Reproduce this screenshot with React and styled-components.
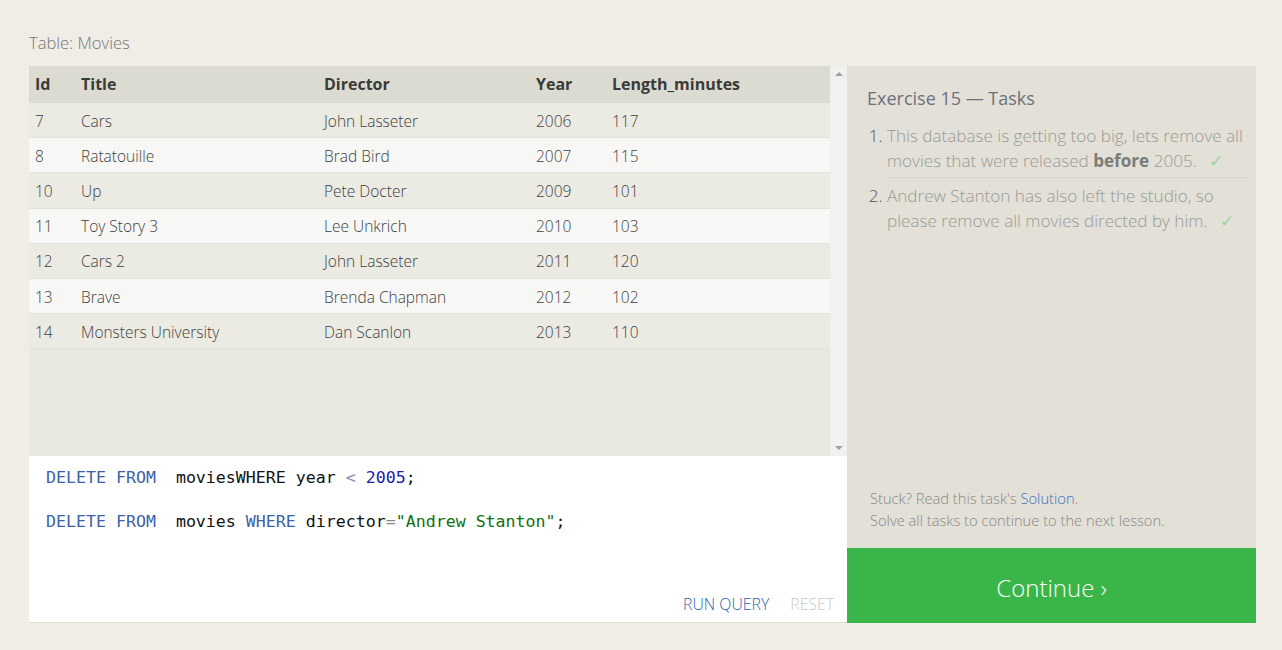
import React from "react";
import styled, { createGlobalStyle } from "styled-components";

const Global = createGlobalStyle`
  body {
    margin: 0;
    background: #efede6;
    font-family: "Open Sans", "Noto Sans", sans-serif;
  }
`;

const Page = styled.div`
  padding: 31px 0 0 29px;
  width: 1227px;
`;

const Caption = styled.div`
  font-size: 16.6px;
  font-weight: 300;
  color: #777;
  height: 35px;
  line-height: 24px;
`;

const Main = styled.div`
  display: grid;
  grid-template-columns: 818px 409px;
  height: 557px;
`;

const Left = styled.div`
  display: flex;
  flex-direction: column;
`;

const TableArea = styled.div`
  display: flex;
  height: 390px;
  background: #e9e8e1;
`;

const Table = styled.div`
  flex: 1;
`;

const Row = styled.div`
  box-sizing: border-box;
  display: grid;
  grid-template-columns: 46px 243px 212px 76px 1fr;
  height: ${(p) => (p.$head ? "37px" : "35.2px")};
  padding-top: ${(p) => (p.$head ? "0" : "1px")};
  align-items: center;
  background: ${(p) => (p.$head ? "#dcdbd1" : p.$even ? "#f7f7f5" : "#ebeae3")};
  border-bottom: 1px solid ${(p) => (p.$head ? "#dcdbd1" : "#e2e1da")};
  color: ${(p) => (p.$head ? "#3a3a38" : "#3f3f3f")};
  font-weight: ${(p) => (p.$head ? 700 : 300)};
  font-size: ${(p) => (p.$head ? "16px" : "15.5px")};
`;

const Cell = styled.div`
  padding-left: 6px;
  white-space: nowrap;
`;

const Scroll = styled.div`
  width: 17px;
  background: #f1f1ef;
  display: flex;
  flex-direction: column;
  justify-content: space-between;
  align-items: center;
  padding: 6px 0;
`;

const Arrow = styled.div`
  width: 0;
  height: 0;
  border-left: 4px solid transparent;
  border-right: 4px solid transparent;
  ${(p) =>
    p.$down
      ? "border-top: 4px solid #a0a0a0;"
      : "border-bottom: 4px solid #a0a0a0;"}
`;

const Editor = styled.div`
  flex: 1;
  background: #fff;
  border-bottom: 1px solid #dedcd4;
  display: flex;
  flex-direction: column;
  padding: 11px 0 0 17px;
`;

const Code = styled.pre`
  margin: 0;
  flex: 1;
  font-family: "DejaVu Sans Mono", "Liberation Mono", monospace;
  font-size: 16.6px;
  line-height: 22px;
  color: #111;
`;

const Kw = styled.span`
  color: ${(p) => p.$c || "#3d62a6"};
`;

const Actions = styled.div`
  display: flex;
  justify-content: flex-end;
  gap: 21px;
  padding: 0 13px 7px 0;
  font-size: 15.8px;
  font-weight: 300;
`;

const Action = styled.span`
  color: ${(p) => (p.$muted ? "#c9c9c9" : "#2a5fae")};
`;

const Right = styled.div`
  display: flex;
  flex-direction: column;
  background: #e2e0d7;
`;

const Tasks = styled.div`
  flex: 1;
  padding: 20px 9px 0 20px;
  display: flex;
  flex-direction: column;
`;

const Heading = styled.div`
  font-size: 18px;
  color: #6d7080;
  font-weight: 400;
  margin-bottom: 13px;
`;

const List = styled.ol`
  margin: 0;
  padding: 0 0 0 20px;
  color: #555;
  font-size: 17.1px;
  font-weight: 300;
  line-height: 25px;
  flex: 1;
`;

const Item = styled.li`
  padding: 0 0 4px 0;
  margin-bottom: 5px;
  border-bottom: ${(p) => (p.$last ? "none" : "1px solid #d6d4cb")};
  &::marker {
    color: #555;
  }
`;

const ItemText = styled.span`
  color: #9a9a96;
  b {
    color: #7c7c78;
    font-weight: 700;
  }
`;

const Check = styled.span`
  color: #9fd39a;
  margin-left: 12px;
  font-size: 17px;
`;

const Hint = styled.div`
  font-size: 14.7px;
  font-weight: 300;
  color: #888;
  line-height: 22px;
  padding: 0 0 17px 3px;
  a {
    color: #3a73bd;
    text-decoration: none;
  }
`;

const Continue = styled.button`
  height: 75px;
  border: none;
  background: #3ab54a;
  color: #fff;
  font-family: inherit;
  font-size: 24px;
  font-weight: 300;
  padding-top: 4px;
  cursor: pointer;
`;

const movies = [
  [7, "Cars", "John Lasseter", 2006, 117],
  [8, "Ratatouille", "Brad Bird", 2007, 115],
  [10, "Up", "Pete Docter", 2009, 101],
  [11, "Toy Story 3", "Lee Unkrich", 2010, 103],
  [12, "Cars 2", "John Lasseter", 2011, 120],
  [13, "Brave", "Brenda Chapman", 2012, 102],
  [14, "Monsters University", "Dan Scanlon", 2013, 110],
];

export default function App() {
  return (
    <>
      <Global />
      <Page>
        <Caption>Table: Movies</Caption>
        <Main>
          <Left>
            <TableArea>
              <Table>
                <Row $head>
                  <Cell>Id</Cell>
                  <Cell>Title</Cell>
                  <Cell>Director</Cell>
                  <Cell>Year</Cell>
                  <Cell>Length_minutes</Cell>
                </Row>
                {movies.map((m, i) => (
                  <Row key={m[0]} $even={i % 2 === 1}>
                    {m.map((v, j) => (
                      <Cell key={j}>{v}</Cell>
                    ))}
                  </Row>
                ))}
              </Table>
              <Scroll>
                <Arrow />
                <Arrow $down />
              </Scroll>
            </TableArea>
            <Editor>
              <Code>
                <Kw>DELETE FROM</Kw>  moviesWHERE year <Kw $c="#8a8ab0">&lt;</Kw>{" "}
                <Kw $c="#1c1ca8">2005</Kw>;{"\n\n"}
                <Kw>DELETE FROM</Kw>  movies <Kw>WHERE</Kw> director
                <Kw $c="#888">=</Kw>
                <Kw $c="#127012">"Andrew Stanton"</Kw>;
              </Code>
              <Actions>
                <Action>RUN QUERY</Action>
                <Action $muted>RESET</Action>
              </Actions>
            </Editor>
          </Left>
          <Right>
            <Tasks>
              <Heading>Exercise 15 — Tasks</Heading>
              <List>
                <Item>
                  <ItemText>
                    This database is getting too big, lets remove all movies
                    that were released <b>before</b> 2005.
                  </ItemText>
                  <Check>✓</Check>
                </Item>
                <Item $last>
                  <ItemText>
                    Andrew Stanton has also left the studio, so please remove
                    all movies directed by him.
                  </ItemText>
                  <Check>✓</Check>
                </Item>
              </List>
              <Hint>
                Stuck? Read this task's <a href="#">Solution</a>.
                <br />
                Solve all tasks to continue to the next lesson.
              </Hint>
            </Tasks>
            <Continue>Continue ›</Continue>
          </Right>
        </Main>
      </Page>
    </>
  );
}
